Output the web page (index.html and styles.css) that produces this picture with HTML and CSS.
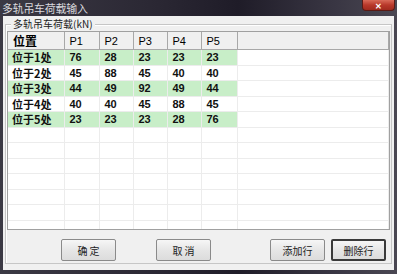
FILE: index.html
```html
<!DOCTYPE html>
<html lang="zh-CN">
<head>
  <meta charset="UTF-8" />
  <title>多轨吊车荷载输入</title>
  <link rel="stylesheet" href="styles.css">
</head>
<body>
  <div class="window">
    <div class="titlebar">
      <span class="title">多轨吊车荷载输入</span>
      <span class="close">✕</span>
    </div>
    <div class="client">
      <div class="group">
        <span class="legend">多轨吊车荷载(kN)</span>
        <div class="grid">
          <table>
            <colgroup>
              <col style="width:56px"><col style="width:35px"><col style="width:34px"><col style="width:34px"><col style="width:34px"><col style="width:36px"><col>
            </colgroup>
            <thead>
              <tr><th class="name">位置</th><th>P1</th><th>P2</th><th>P3</th><th>P4</th><th>P5</th><th></th></tr>
            </thead>
            <tbody>
              <tr class="odd"><td class="name">位于1处</td><td>76</td><td>28</td><td>23</td><td>23</td><td>23</td><td class="blank"></td></tr>
              <tr><td class="name">位于2处</td><td>45</td><td>88</td><td>45</td><td>40</td><td>40</td><td class="blank"></td></tr>
              <tr class="odd"><td class="name">位于3处</td><td>44</td><td>49</td><td>92</td><td>49</td><td>44</td><td class="blank"></td></tr>
              <tr><td class="name">位于4处</td><td>40</td><td>40</td><td>45</td><td>88</td><td>45</td><td class="blank"></td></tr>
              <tr class="odd"><td class="name">位于5处</td><td>23</td><td>23</td><td>23</td><td>28</td><td>76</td><td class="blank"></td></tr>
              <tr><td></td><td></td><td></td><td></td><td></td><td></td><td></td></tr>
              <tr><td></td><td></td><td></td><td></td><td></td><td></td><td></td></tr>
              <tr><td></td><td></td><td></td><td></td><td></td><td></td><td></td></tr>
              <tr><td></td><td></td><td></td><td></td><td></td><td></td><td></td></tr>
              <tr><td></td><td></td><td></td><td></td><td></td><td></td><td></td></tr>
              <tr><td></td><td></td><td></td><td></td><td></td><td></td><td></td></tr>
              <tr><td></td><td></td><td></td><td></td><td></td><td></td><td></td></tr>
            </tbody>
          </table>
        </div>
        <div class="buttons">
          <button class="btn-ok">确 定</button>
          <button class="btn-cancel">取 消</button>
          <button class="btn-add">添加行</button>
          <button class="btn-del default">删除行</button>
        </div>
      </div>
    </div>
  </div>
</body>
</html>
```

FILE: styles.css
```css
body {
  margin: 0;
  background: #24222c;
  font-family: "Noto Sans CJK SC", "Liberation Sans", sans-serif;
  font-size: 11px;
}
.window {
  width: 397px;
  height: 274px;
  display: flex;
  flex-direction: column;
  background: linear-gradient(90deg, #3b3944 0%, #2a2733 40%, #1f1c28 60%, #3a3744 85%, #4a4752 100%);
}
.titlebar {
  height: 16px;
  position: relative;
  display: flex;
  align-items: center;
}
.title {
  margin-left: 2px;
  color: #d8d8dc;
  font-size: 11px;
  line-height: 16px;
  letter-spacing: -0.3px;
}
.close {
  position: absolute;
  top: 0;
  right: 2px;
  width: 33px;
  height: 11px;
  background: linear-gradient(#d86a58, #b8382a 50%, #a02a1e);
  border: 1px solid #5a1a14;
  border-top: none;
  border-radius: 0 0 4px 4px;
  color: #fff;
  font-size: 8px;
  font-weight: bold;
  line-height: 11px;
  text-align: center;
  box-sizing: border-box;
}
.client {
  flex: 1;
  margin: 0 3px 4px 3px;
  background: #f0f0f0;
  padding: 8px 2px 6px 2px;
  display: flex;
}
.group {
  flex: 1;
  position: relative;
  border: 1px solid #c6c6c6;
  box-shadow: inset 1px 1px 0 #fff;
  padding: 6px 0 1px 1px;
  display: flex;
  flex-direction: column;
}
.legend {
  position: absolute;
  top: -7px;
  left: 5px;
  padding: 0 2px;
  background: #f0f0f0;
  color: #222;
  font-size: 10px;
  line-height: 12px;
}
.grid {
  height: 197px;
  width: 381px;
  overflow: hidden;
  border: 1px solid #a0a0a0;
  background: #fff;
}
table {
  border-collapse: collapse;
  table-layout: fixed;
  width: 100%;
}
th {
  height: 17px;
  padding: 0 0 0 5px;
  background: #f0f0f0;
  border-right: 1px solid #a8a8a8;
  border-bottom: 1px solid #a8a8a8;
  text-align: left;
  font-family: "Liberation Sans", "Noto Sans CJK SC", sans-serif;
  font-weight: normal;
  font-size: 11px;
  color: #000;
}
th.name {
  font-family: "Noto Sans CJK SC", sans-serif;
  font-weight: bold;
  font-size: 12px;
}
td {
  height: 14.5px;
  padding: 0 0 0 5px;
  border-right: 1px solid #ececec;
  border-bottom: 1px solid #ececec;
  font-family: "Liberation Sans", "Noto Sans CJK SC", sans-serif;
  font-weight: bold;
  font-size: 11px;
  line-height: 14px;
  color: #111;
}
td.name {
  padding-left: 4px;
  font-family: "Noto Sans CJK SC", sans-serif;
  font-size: 11px;
}
tr.odd td {
  background: #c8eec8;
}
tr.odd td.blank {
  background: #fff;
}
.buttons {
  display: flex;
  margin-top: 9px;
}
button {
  width: 55px;
  height: 22px;
  padding: 0;
  background: linear-gradient(#f6f6f6, #e6e6e6 50%, #dcdcdc);
  border: 1px solid #8a8a8a;
  border-radius: 2px;
  font-family: "Noto Sans CJK SC", sans-serif;
  font-size: 10px;
  color: #222;
}
button.default {
  border: 2px solid #3a3a3a;
}
.btn-ok {
  margin-left: 54px;
}
.btn-cancel {
  margin-left: 40px;
}
.btn-add {
  margin-left: 59px;
}
.btn-del {
  margin-left: 6px;
}
```
